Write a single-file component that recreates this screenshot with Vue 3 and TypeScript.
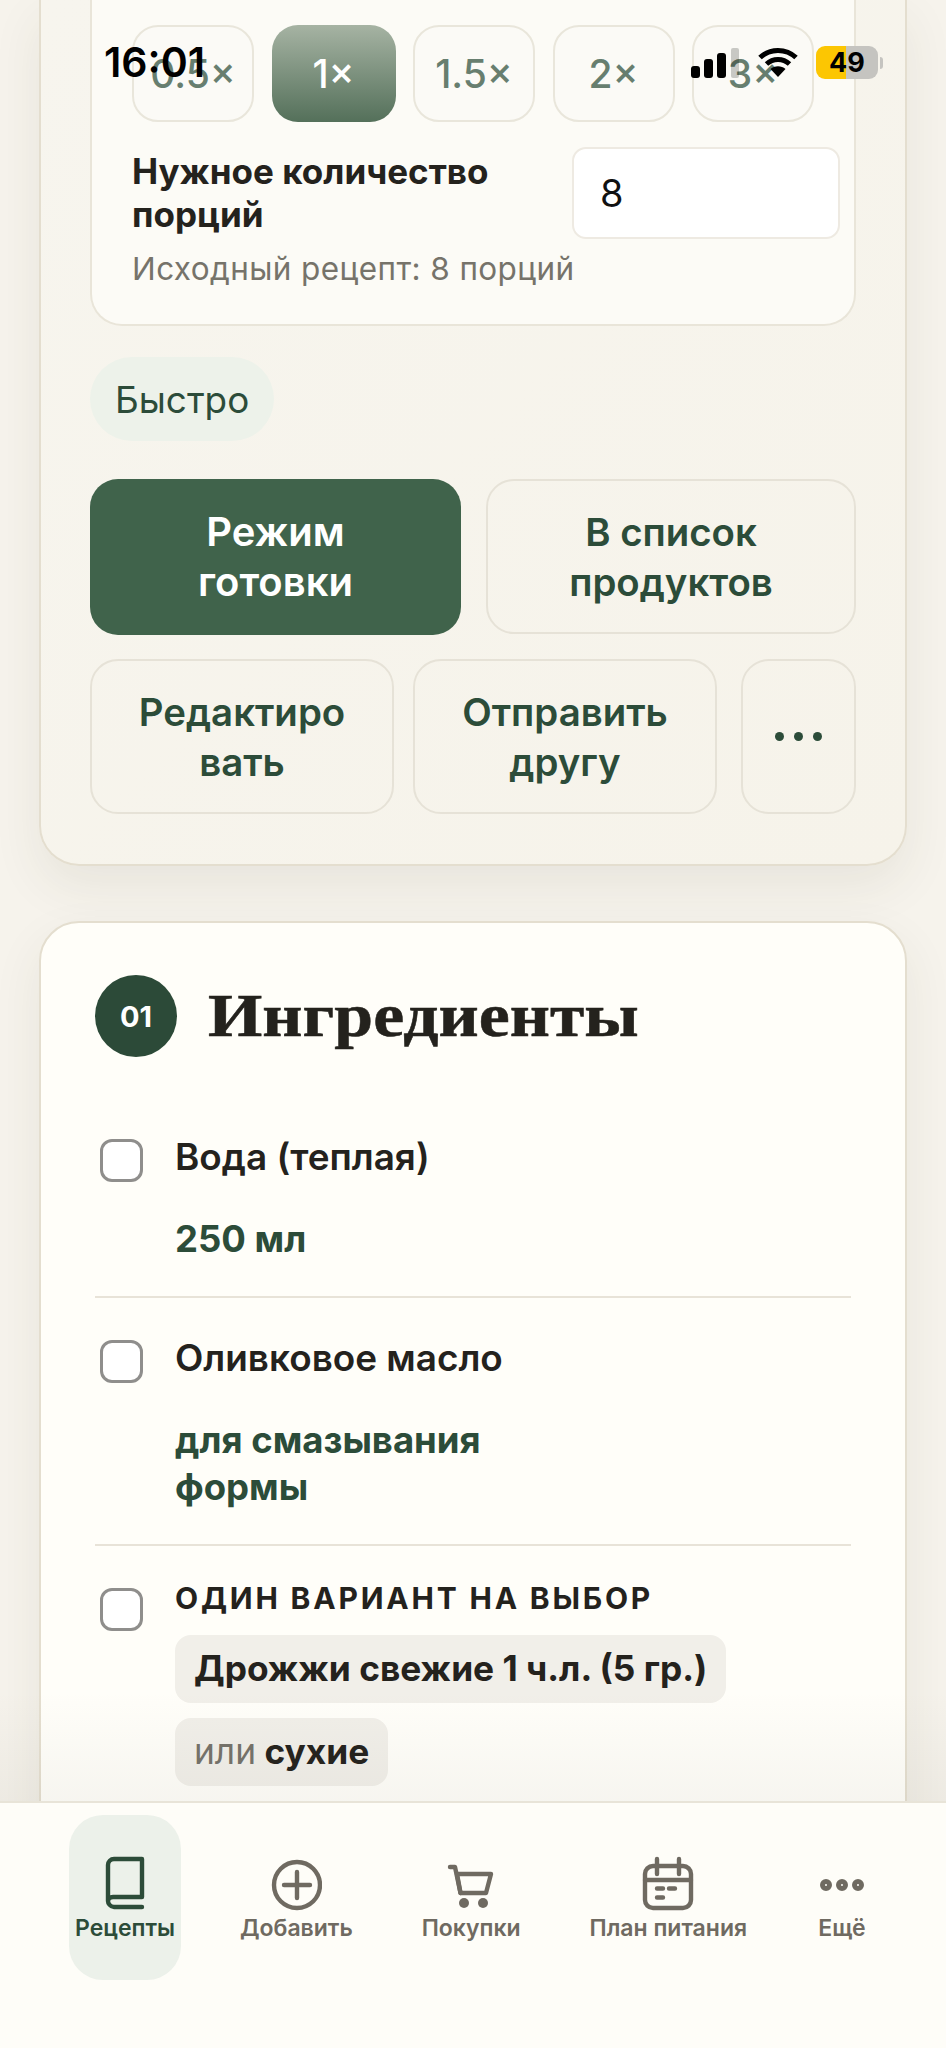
<script setup lang="ts">
import { ref } from "vue";

const factors = ["0.5×", "1×", "1.5×", "2×", "3×"];
const activeFactor = ref("1×");
const portions = ref("8");
</script>

<template>
  <div class="screen">
    <main class="content">
      <section class="card recipe">
        <div class="scale">
          <div class="factors">
            <button
              v-for="factor in factors"
              :key="factor"
              class="factor"
              :class="{ active: factor === activeFactor }"
              @click="activeFactor = factor"
            >
              {{ factor }}
            </button>
          </div>
          <div class="portions">
            <label class="portions-label" for="portions">Нужное количество порций</label>
            <input id="portions" v-model="portions" class="portions-input" type="text" />
          </div>
          <div class="hint">Исходный рецепт: 8 порций</div>
        </div>

        <div class="tags"><span class="tag">Быстро</span></div>

        <div class="actions">
          <button class="action primary">Режим<br />готовки</button>
          <button class="action">В список<br />продуктов</button>
        </div>
        <div class="actions second">
          <button class="action">Редактиро<br />вать</button>
          <button class="action">Отправить<br />другу</button>
          <button class="action more" aria-label="Ещё"><i></i><i></i><i></i></button>
        </div>
      </section>

      <section class="card ingredients">
        <header class="section-head">
          <span class="number">01</span>
          <h2>Ингредиенты</h2>
        </header>

        <div class="item">
          <span class="check"></span>
          <div class="item-body">
            <div class="name">Вода (теплая)</div>
            <div class="amount">250 мл</div>
          </div>
        </div>

        <div class="item">
          <span class="check"></span>
          <div class="item-body">
            <div class="name">Оливковое масло</div>
            <div class="amount">для смазывания<br />формы</div>
          </div>
        </div>

        <div class="item choice">
          <span class="check"></span>
          <div class="item-body">
            <div class="choice-title">ОДИН ВАРИАНТ НА ВЫБОР</div>
            <div class="chip">Дрожжи свежие 1 ч.л. (5 гр.)</div>
            <div class="chip"><span class="or">или</span> сухие</div>
          </div>
        </div>
      </section>
      <div class="fade"></div>
    </main>

    <nav class="tabbar">
      <a class="tab current">
        <svg width="42" height="55" viewBox="0 0 42 55" fill="none" stroke="currentColor" stroke-width="4.4" stroke-linecap="round" stroke-linejoin="round">
          <path d="M4 45V9a6 6 0 0 1 6-6h28v38H9c-3 0-5 2-5 4s2 6 6 6h28" />
        </svg>
        <span>Рецепты</span>
      </a>
      <a class="tab">
        <svg width="52" height="55" viewBox="0 0 52 55" fill="none" stroke="currentColor" stroke-width="4.4" stroke-linecap="round">
          <circle cx="27" cy="29" r="23" />
          <path d="M14 29h26M27 16v26" />
        </svg>
        <span>Добавить</span>
      </a>
      <a class="tab">
        <svg width="48" height="55" viewBox="0 0 48 55" fill="none" stroke="currentColor" stroke-width="4.4" stroke-linecap="round" stroke-linejoin="round">
          <path d="M3 11h5l5.500 26" />
          <path d="M10 18h34l-5 19H13.500z" />
          <circle cx="17" cy="47" r="5" fill="currentColor" stroke="none" />
          <circle cx="36" cy="47" r="5" fill="currentColor" stroke="none" />
        </svg>
        <span>Покупки</span>
      </a>
      <a class="tab">
        <svg width="52" height="55" viewBox="0 0 52 55" fill="none" stroke="currentColor" stroke-width="4.4" stroke-linecap="round" stroke-linejoin="round">
          <rect x="3" y="10" width="46" height="42" rx="8" />
          <path d="M3 24h46M15 3v15M37 3v15" />
          <path d="M15 32.500h6M27 32.500h6M15 41.500h6" />
        </svg>
        <span>План питания</span>
      </a>
      <a class="tab">
        <svg width="52" height="55" viewBox="0 0 52 55" fill="none" stroke="currentColor" stroke-width="5">
          <circle cx="10" cy="29" r="3.500" />
          <circle cx="26" cy="29" r="3.500" />
          <circle cx="42" cy="29" r="3.500" />
        </svg>
        <span>Ещё</span>
      </a>
    </nav>

    <!-- system status bar, drawn over the scrolled page -->
    <div class="statusbar">
      <span class="time">16:01</span>
      <div class="status-icons">
        <svg class="signal" width="48" height="30" viewBox="0 0 48 30">
          <rect x="0" y="18" width="9" height="12" rx="3" fill="#000" />
          <rect x="13" y="11" width="9" height="19" rx="3" fill="#000" />
          <rect x="26" y="5" width="9" height="25" rx="3" fill="#000" />
          <rect x="40" y="0" width="8" height="30" rx="2" fill="#000" opacity="0.2" />
        </svg>
        <svg class="wifi" width="40" height="30" viewBox="0 0 40 30" fill="none" stroke="#000" stroke-width="5">
          <path d="M2 10.500C12 1 28 1 38 10.500" />
          <path d="M8.500 17C15 11 25 11 31.500 17" />
          <path d="M20 30l-7.500-8c4-3.800 11-3.800 15 0z" fill="#000" stroke="none" />
        </svg>
        <div class="battery">
          <span class="battery-level">49</span>
        </div>
        <span class="battery-tip"></span>
      </div>
    </div>
  </div>
</template>

<style scoped>
* {
  box-sizing: border-box;
}

.screen {
  position: relative;
  display: flex;
  flex-direction: column;
  height: 2048px;
  overflow: hidden;
  background: #f6f3ec;
  color: #24221d;
  font-family: Inter, "Liberation Sans", sans-serif;
}

.content {
  position: relative;
  flex: 1;
  min-height: 0;
  overflow: hidden;
  padding: 0 39px;
}

.card {
  border: 2px solid #e4decf;
  border-radius: 40px;
  box-shadow: 0 20px 50px rgba(70, 60, 40, 0.08);
}

.recipe {
  height: 866px;
  padding: 0 49px;
  border-top: none;
  border-radius: 0 0 40px 40px;
  background: linear-gradient(135deg, #f7f5ee, #f6f3ea);
}

.scale {
  height: 326px;
  padding: 25px 0 0 40px;
  border: 2px solid #e9e5d9;
  border-top: none;
  border-radius: 0 0 32px 32px;
  background: #fcfbf6;
}

.factors {
  display: flex;
  gap: 17.5px;
  margin-bottom: 25px;
}

.factor {
  flex: none;
  width: 122px;
  height: 97px;
  padding: 0;
  border: 2px solid #e9e6db;
  border-radius: 26px;
  background: #fbfaf6;
  color: #677e6f;
  font: 500 39px Inter, sans-serif;
}

.factor.active {
  width: 124px;
  border: none;
  background: linear-gradient(180deg, #a6b3a3, #54705a);
  color: #fff;
}

.portions {
  display: flex;
  justify-content: space-between;
  padding-right: 14px;
}

.portions-label {
  width: 370px;
  padding-top: 3px;
  font-size: 35px;
  font-weight: 700;
  line-height: 43px;
}

.portions-input {
  width: 268px;
  height: 92px;
  padding: 0 26px;
  border: 2px solid #eeeae2;
  border-radius: 14px;
  background: #fff;
  color: #111;
  font: 400 38px Inter, sans-serif;
  outline: none;
}

.hint {
  margin-top: 10px;
  color: #76736a;
  font-size: 31.5px;
  letter-spacing: 0.4px;
}

.tags {
  display: flex;
  margin: 31px 0 38px;
}

.tag {
  display: flex;
  align-items: center;
  height: 84px;
  padding: 0 25px;
  border-radius: 42px;
  background: #edf2ea;
  color: #2c4c39;
  font-size: 36.8px;
}

.actions {
  display: flex;
  gap: 25px;
}

.actions.second {
  gap: 19px;
  margin-top: 25px;
}

.action {
  flex: 1 1 0;
  height: 155px;
  padding: 0;
  border: 2px solid #e6e2d7;
  border-radius: 28px;
  background: transparent;
  color: #2c4c39;
  font: 600 38.4px/50px Inter, sans-serif;
}

.action.primary {
  flex: none;
  width: 371px;
  height: 156px;
  margin-bottom: -1px;
  border: none;
  background: #40634b;
  color: #fff;
  font-size: 40px;
}

.action.more {
  display: flex;
  flex: none;
  align-items: center;
  justify-content: center;
  gap: 10px;
  width: 115px;
  margin-left: 5px;
}

.action.more i {
  width: 9px;
  height: 9px;
  border-radius: 50%;
  background: #2c4c39;
}

.ingredients {
  margin-top: 55px;
  padding: 52px 54px 100px;
  background: #fffef9;
}

.section-head {
  display: flex;
  align-items: center;
  gap: 31px;
  margin-bottom: 80px;
}

.number {
  display: flex;
  flex: none;
  align-items: center;
  justify-content: center;
  width: 82px;
  height: 82px;
  border-radius: 50%;
  background: #2c4a38;
  color: #fff;
  font-size: 29px;
  font-weight: 700;
}

/* the serif bold runs narrow, so it is widened and thickened a little */
h2 {
  margin: 0;
  font-family: "Liberation Serif", serif;
  font-size: 61px;
  font-weight: 700;
  line-height: 82px;
  transform: scaleX(1.145);
  transform-origin: left center;
  -webkit-text-stroke: 0.5px #24221d;
}

.item {
  display: flex;
  gap: 32px;
  padding-bottom: 33px;
  border-bottom: 2px solid #e8e3d8;
}

.item + .item {
  margin-top: 40px;
}

.item.choice {
  margin-top: 40px;
  border-bottom: none;
}

.check {
  flex: none;
  width: 43px;
  height: 43px;
  margin: 2px 0 0 5px;
  border: 3px solid #8f8e8c;
  border-radius: 12px;
  background: #fff;
}

.name {
  font-size: 36.9px;
  font-weight: 600;
  line-height: 40px;
}

.amount {
  margin-top: 39px;
  color: #2c4c39;
  font-size: 36.5px;
  font-weight: 700;
  line-height: 47px;
}

.choice-title {
  font-size: 30px;
  font-weight: 700;
  letter-spacing: 2.8px;
  line-height: 24px;
}

.chip {
  width: fit-content;
  height: 68px;
  margin-top: 15px;
  padding: 0 19px;
  border-radius: 16px;
  background: #f1efe9;
  font-size: 35.3px;
  font-weight: 700;
  line-height: 68px;
}

.choice-title + .chip {
  margin-top: 25px;
}

.or {
  color: #75726a;
  font-weight: 400;
}

.fade {
  position: absolute;
  right: 0;
  bottom: 0;
  left: 0;
  height: 110px;
  background: linear-gradient(180deg, rgba(90, 85, 70, 0), rgba(90, 85, 70, 0.05));
  pointer-events: none;
}

.tabbar {
  flex: none;
  display: flex;
  justify-content: space-between;
  height: 247px;
  padding: 12px 72px 0 69px;
  border-top: 2px solid #e8e4d8;
  background: #fefdf8;
}

.tab {
  display: flex;
  flex-direction: column;
  align-items: center;
  height: 165px;
  padding: 41px 6px 0;
  border-radius: 34px;
  color: #6f6a61;
  font-size: 23px;
  font-weight: 600;
}

.tab span {
  margin-top: 3px;
  white-space: nowrap;
}

.tab.current {
  margin-right: -4px;
  background: #ecf1ea;
  color: #2c4c39;
}

.statusbar {
  position: absolute;
  top: 46px;
  right: 63px;
  left: 104px;
  display: flex;
  align-items: flex-start;
  justify-content: space-between;
}

.time {
  color: #000;
  font-size: 41px;
  font-weight: 600;
  line-height: 33px;
}

.status-icons {
  display: flex;
  align-items: flex-start;
}

.signal {
  margin: 2px 19px 0 0;
}

.wifi {
  margin: 1px 18px 0 0;
}

.battery {
  width: 62px;
  height: 33px;
  border-radius: 9px;
  background: linear-gradient(90deg, #fcc602 48%, #c5c4c0 48%);
  color: #000;
  font-size: 27px;
  font-weight: 700;
  line-height: 33px;
  text-align: center;
}

.battery-tip {
  width: 3px;
  height: 12px;
  margin: 11px 0 0 2px;
  border-radius: 0 3px 3px 0;
  background: #c5c4c0;
}
</style>
